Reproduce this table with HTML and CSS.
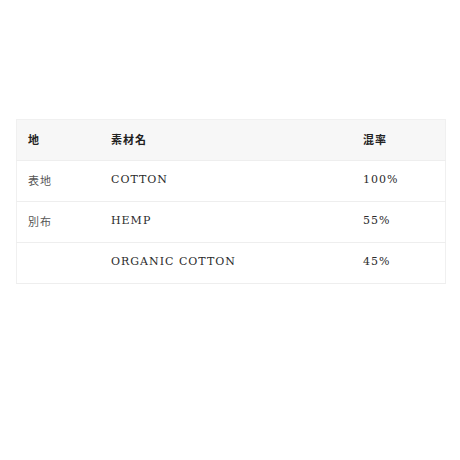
FILE: index.html
```html
<!DOCTYPE html>
<html lang="ja">
<head>
<meta charset="UTF-8">
<title>素材</title>
<link rel="stylesheet" href="styles.css">
</head>
<body>
  <div class="wrap">
    <table class="spec">
      <thead>
        <tr>
          <th class="c1">地</th>
          <th class="c2">素材名</th>
          <th class="c3">混率</th>
        </tr>
      </thead>
      <tbody>
        <tr>
          <td class="jp">表地</td>
          <td>COTTON</td>
          <td>100%</td>
        </tr>
        <tr>
          <td class="jp">別布</td>
          <td>HEMP</td>
          <td>55%</td>
        </tr>
        <tr>
          <td></td>
          <td>ORGANIC COTTON</td>
          <td>45%</td>
        </tr>
      </tbody>
    </table>
  </div>
</body>
</html>
```

FILE: styles.css
```css
body {
  margin: 0;
  background: #fff;
  font-family: "DejaVu Serif", "Noto Sans CJK JP", serif;
  color: #2b2b2b;
}
.wrap {
  padding: 119px 14px 0 16px;
}
.spec {
  width: 100%;
  border-collapse: collapse;
  border: 1px solid #f0f0f0;
  font-size: 11px;
  letter-spacing: 1px;
}
.spec th,
.spec td {
  text-align: left;
  padding: 0 11px 3px;
  height: 37px;
  border-bottom: 1px solid #eeeeee;
}
.spec thead tr {
  background: #f7f7f7;
}
.spec th {
  font-weight: bold;
  color: #222;
}
.spec .c1 { width: 61px; }
.spec .c2 { width: 230px; }
.jp {
  font-family: "Noto Sans CJK JP", sans-serif;
  color: #555;
}
```
